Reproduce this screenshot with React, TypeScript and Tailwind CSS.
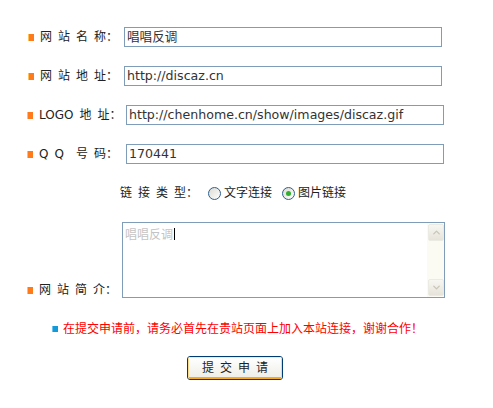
import { ChevronDown, ChevronUp } from "lucide-react"

const font = "font-['DejaVu_Sans','Noto_Sans_CJK_SC',sans-serif]"

function Bullet({ color = "orange" }: { color?: "orange" | "blue" }) {
    if (color === "blue") {
        return <span className="mr-[5px] h-[6px] w-[6px] shrink-0 border-l border-[#6cc4ee] bg-[#129bd8]" />
    }
    return <span className="mr-[6px] h-[7px] w-[6px] shrink-0 border-l border-[#ffc25a] bg-[#ff7a1a]" />
}

function Label({ text }: { text: string }) {
    return (
        <span className="whitespace-pre text-[12px] leading-[14px] text-[#222] [word-spacing:2.2px]">{text}</span>
    )
}

function FieldRow({
    label,
    value,
    width,
    pad,
}: {
    label: string
    value: string
    width: string
    pad: string
}) {
    return (
        <div className="mb-[19px] flex h-[20px] items-center">
            <div className={`${width} ${pad} flex shrink-0 items-center`}>
                <Bullet />
                <Label text={label} />
            </div>
            <div className="flex h-[20px] w-[318px] items-center border border-[#7f9db9] bg-white pl-[2px] text-[12.6px] text-[#333]">
                {value}
            </div>
        </div>
    )
}

function Radio({ checked, label }: { checked?: boolean; label: string }) {
    return (
        <div className="flex items-center">
            <span className="flex h-[13px] w-[13px] items-center justify-center rounded-full border border-[#2c5f8f] bg-gradient-to-br from-[#dcdad2] to-[#ffffff]">
                {checked ? <span className="h-[5px] w-[5px] rounded-full bg-[#2fae2f]" /> : null}
            </span>
            <span className="ml-[3px] text-[12px] leading-[14px] text-[#222]">{label}</span>
        </div>
    )
}

function ScrollButton({ up }: { up?: boolean }) {
    return (
        <div className="flex h-[17px] w-[16px] items-center justify-center rounded-[2px] border border-[#ecebe3] bg-gradient-to-b from-[#f7f6f1] to-[#e6e4da]">
            {up ? (
                <ChevronUp size={11} strokeWidth={3} className="text-[#c9c6b8]" />
            ) : (
                <ChevronDown size={11} strokeWidth={3} className="text-[#c9c6b8]" />
            )}
        </div>
    )
}

export default function App() {
    return (
        <div className={`${font} h-[408px] w-[493px] bg-white pt-[27px]`}>
            <FieldRow label="网 站 名 称：" value="唱唱反调" width="w-[124px]" pad="pl-[28px]" />
            <FieldRow label="网 站 地 址：" value="http://discaz.cn" width="w-[124px]" pad="pl-[28px]" />
            <FieldRow
                label="LOGO 地 址："
                value="http://chenhome.cn/show/images/discaz.gif"
                width="w-[126px]"
                pad="pl-[27px]"
            />
            <FieldRow label="Q Q  号 码：" value="170441" width="w-[126px]" pad="pl-[27px]" />

            <div className="mt-[1px] flex h-[20px] items-center pl-[120px]">
                <Label text="链 接 类 型：" />
                <div className="ml-[10px] flex items-center gap-[10px]">
                    <Radio label="文字连接" />
                    <Radio checked label="图片链接" />
                </div>
            </div>

            <div className="mt-[19px] flex h-[76px]">
                <div className="flex w-[122px] shrink-0 items-end pb-[1px] pl-[27px]">
                    <div className="flex items-center">
                        <Bullet />
                        <Label text="网 站 简 介：" />
                    </div>
                </div>
                <div className="flex h-[76px] w-[323px] border border-[#7f9db9] bg-white">
                    <div className="flex flex-1 items-start pl-[2px] pt-[5px]">
                        <span className="text-[12px] leading-[14px] text-[#c4c4c4]">唱唱反调</span>
                        <span className="ml-[1px] h-[12px] w-[1px] bg-black" />
                    </div>
                    <div className="flex w-[17px] flex-col justify-between bg-[#fbfbf4] p-[1px]">
                        <ScrollButton up />
                        <ScrollButton />
                    </div>
                </div>
            </div>

            <div className="mt-[23px] flex h-[16px] items-center pl-[52px]">
                <Bullet color="blue" />
                <span className="text-[12px] leading-[14px] text-[#ff0000]">
                    在提交申请前，请务必首先在贵站页面上加入本站连接，谢谢合作！
                </span>
            </div>

            <div className="mt-[19px] pl-[187px]">
                <button className="flex h-[24px] w-[96px] items-center justify-center rounded-[3px] border border-[#003c74] p-0">
                    <span className="flex h-full w-full items-center justify-center rounded-[2px] border-x border-t border-b-2 border-x-[#fbd98a] border-t-[#fde9b4] border-b-[#f4a92a] bg-gradient-to-b from-[#ffffff] to-[#efeee8] text-[12px] leading-[14px] text-[#222] [word-spacing:2.2px]">
                        <span className="whitespace-pre">提 交 申 请</span>
                    </span>
                </button>
            </div>
        </div>
    )
}
